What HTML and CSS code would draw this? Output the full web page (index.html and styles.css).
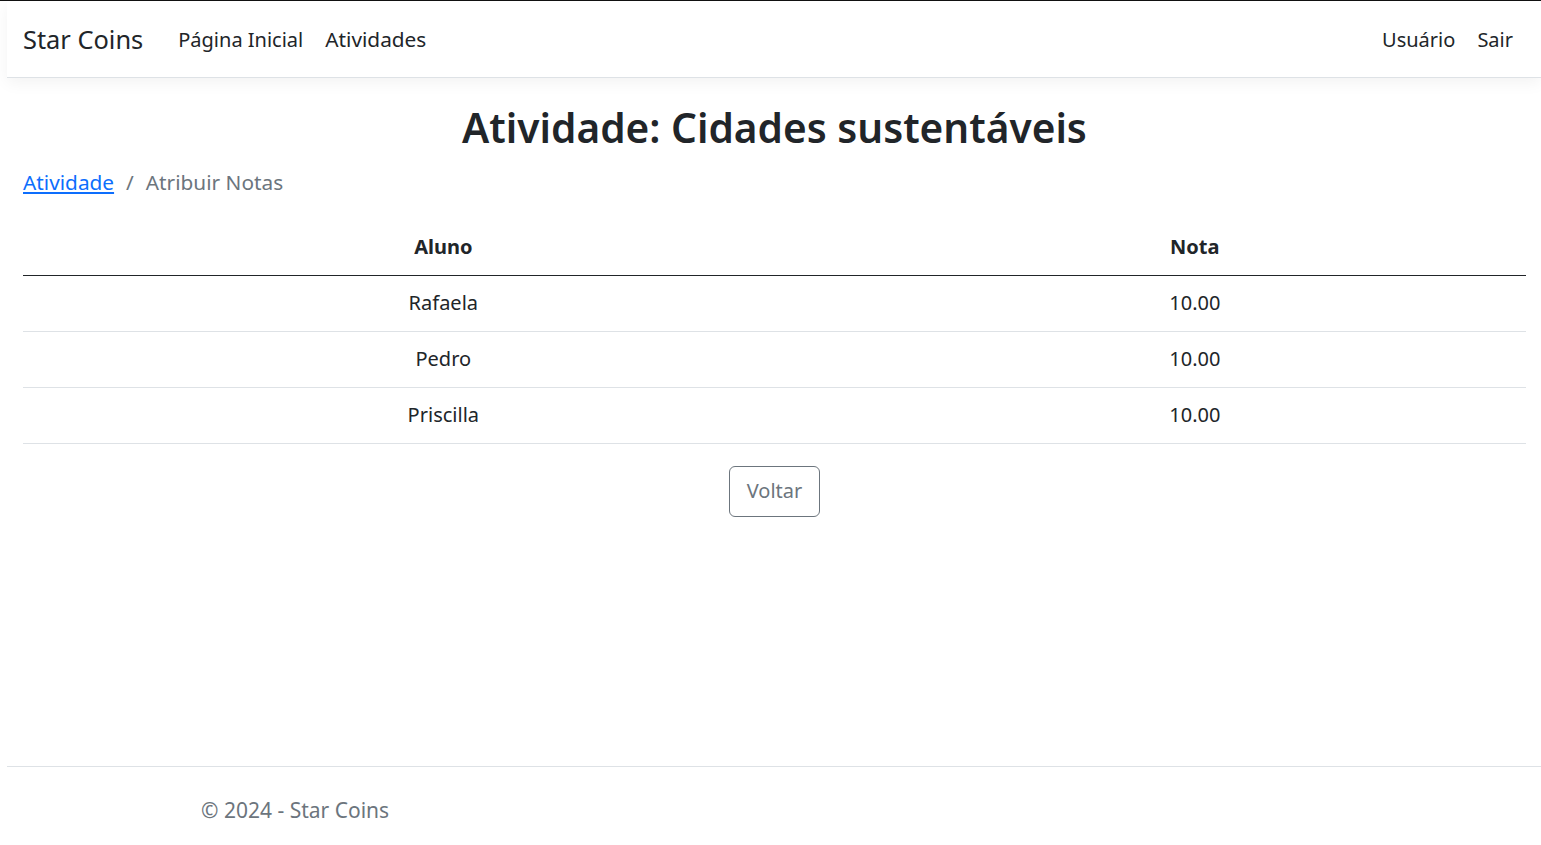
FILE: index.html
```html
<!DOCTYPE html>
<html lang="pt-br">
<head>
<meta charset="utf-8">
<title>Atribuir Notas - Star Coins</title>
<link rel="stylesheet" href="styles.css">
</head>
<body>
<div class="page">
  <header class="navbar">
    <a class="brand" href="#">Star Coins</a>
    <nav class="nav-main">
      <a class="nav-link" href="#">Página Inicial</a>
      <a class="nav-link" href="#">Atividades</a>
    </nav>
    <nav class="nav-user">
      <a class="nav-link" href="#">Usuário</a>
      <a class="nav-link" href="#">Sair</a>
    </nav>
  </header>

  <main class="content">
    <h1 class="title">Atividade: Cidades sustentáveis</h1>
    <ol class="breadcrumb">
      <li class="crumb"><a href="#">Atividade</a></li>
      <li class="crumb active">Atribuir Notas</li>
    </ol>

    <table class="grades">
      <thead>
        <tr>
          <th class="col-aluno">Aluno</th>
          <th class="col-nota">Nota</th>
        </tr>
      </thead>
      <tbody>
        <tr><td>Rafaela</td><td>10.00</td></tr>
        <tr><td>Pedro</td><td>10.00</td></tr>
        <tr><td>Priscilla</td><td>10.00</td></tr>
      </tbody>
    </table>

    <div class="actions">
      <a class="btn-outline" href="#">Voltar</a>
    </div>
  </main>

  <footer class="footer">
    <div class="footer-inner">&copy; 2024 - Star Coins</div>
  </footer>
</div>
</body>
</html>
```

FILE: styles.css
```css
html, body {
  margin: 0;
  padding: 0;
}

body {
  font-family: "Noto Sans", "Segoe UI", sans-serif;
  color: #212529;
  background: #ffffff;
  border-top: 1px solid #111111;
}

.page {
  margin-left: 7px;
  min-height: 844px;
  display: flex;
  flex-direction: column;
}

a {
  color: inherit;
  text-decoration: none;
}

/* Navbar */
.navbar {
  height: 76px;
  display: flex;
  align-items: center;
  padding: 0 17px 0 15px;
  background: #ffffff;
  border-bottom: 1px solid #dee2e6;
  box-shadow: 0 5px 15px rgba(0, 0, 0, 0.05);
  position: relative;
  z-index: 1;
}

.brand {
  font-size: 25.4px;
  color: #212529;
  margin-right: 24px;
  padding-left: 1px;
}

.nav-main,
.nav-user {
  display: flex;
  align-items: center;
}

.nav-user {
  margin-left: auto;
}

.nav-link {
  font-size: 20px;
  color: #212529;
  padding: 8px 11px;
}

.nav-main .nav-link + .nav-link {
  font-size: 20.8px;
}

/* Main */
.content {
  padding: 0 15px 0 16px;
}

.title {
  text-align: center;
  font-size: 40.6px;
  font-weight: 600;
  line-height: 1.2;
  margin: 26px 0 14px;
}

.breadcrumb {
  list-style: none;
  display: flex;
  margin: 0 0 23px;
  padding: 0;
  font-size: 20.8px;
  line-height: 30px;
}

.crumb a {
  color: #0d6efd;
  text-decoration: underline;
}

.crumb + .crumb {
  padding-left: 12px;
}

.crumb + .crumb::before {
  content: "/";
  color: #6c757d;
  padding-right: 12px;
}

.crumb.active {
  color: #6c757d;
}

/* Table */
.grades {
  width: 100%;
  border-collapse: collapse;
  font-size: 20px;
}

.grades th,
.grades td {
  text-align: center;
  height: 55px;
  padding: 0 10px;
  line-height: 30px;
}

.col-aluno {
  width: 55.93%;
}

.grades th {
  font-weight: 700;
  border-bottom: 1px solid #212529;
}

.grades td {
  border-bottom: 1px solid #dee2e6;
}

/* Actions */
.actions {
  display: flex;
  justify-content: center;
  padding-top: 22px;
}

.btn-outline {
  display: inline-block;
  box-sizing: border-box;
  height: 51px;
  padding: 9px 17px;
  font-size: 20px;
  line-height: 30px;
  color: #6c757d;
  border: 1px solid #6c757d;
  border-radius: 6px;
}

/* Footer */
.footer {
  margin-top: auto;
  border-top: 1px solid #dee2e6;
  height: 78px;
}

.footer-inner {
  padding-left: 194px;
  padding-top: 28px;
  font-size: 21px;
  line-height: 30px;
  color: #6c757d;
}
```
